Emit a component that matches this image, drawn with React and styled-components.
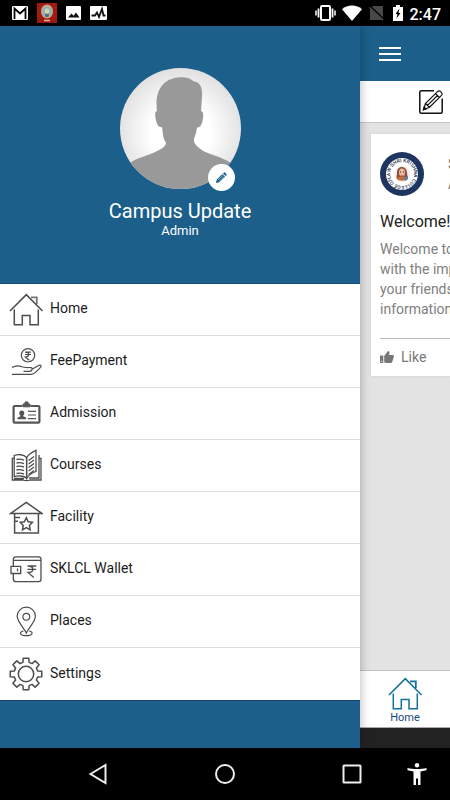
import React, { useState } from 'react';
import styled, { createGlobalStyle } from 'styled-components';

const gearPoints = () => {
  const points = [];
  for (let i = 0; i < 8; i++) {
    const a = i * 45;
    [[-15, 12], [-10, 16], [10, 16], [15, 12]].forEach(([da, r]) => {
      const t = ((a + da) * Math.PI) / 180;
      points.push(`${(17 + r * Math.sin(t)).toFixed(2)},${(17 - r * Math.cos(t)).toFixed(2)}`);
    });
  }
  return points.join(' ');
};

const HouseShape = () => (
  <>
    <path d="M22 4.3h5.8v7" stroke="#777" strokeWidth="1.8" className="chimney" />
    <path d="M1 18 17.3 1.6 33.5 18" />
    <path d="M5.3 16.5v15.2h8v-9.2H21v9.2h8.3V16.5" />
  </>
);

const icons = {
  home: <HouseShape />,
  fee: (
    <g strokeWidth="1.2">
      <circle cx="19" cy="10.3" r="6.7" />
      <path d="M16 7.2h6M16 9.5h6M16.3 7.2c4.6 0 4.6 4.8 0 4.8l4 3.2" />
      <path d="M3 22.5c3-1.8 7-2 10-.7 3 1.2 6 .5 9 .8 2 .3 1.5 3.6-1.5 3.8h-6M23 24.2l7-4c1.8-.6 2.6.6 1.7 2l-4.9 5c-2 2-3 2.1-5 2.1H3" />
    </g>
  ),
  admission: (
    <g stroke="#555">
      <path d="M13.5 9H5.8c-.8 0-1.2.5-1.2 1.2v14.3c0 .8.5 1.2 1.2 1.2h23.4c.8 0 1.2-.5 1.2-1.2V10.2c0-.7-.4-1.2-1.2-1.2h-7.7" strokeWidth="2.2" />
      <path d="M14 9.8V7h2V5h3v2h2v2.8z" fill="#555" strokeWidth="1" />
      <path d="M8.500 22.300v-1.300c.5-1 3-1.200 3-2.200-2-2-1.500-5.300 1.300-5.300s3.300 3.300 1.300 5.300c0 1 2.700 1.200 3 2.200v1.300z" fill="#555" stroke="none" />
      <path d="M19 14.3h8M19 18h8M19 21.7h8" strokeWidth="1.2" />
    </g>
  ),
  courses: (
    <g strokeWidth="1.3">
      <path d="M17.6 8.5C14.5 5.3 9 5 5.200 6.500v21.200c4-1.400 9.500-1 12.400 1.600z" />
      <path d="M17.6 8.5c2.400-3.600 5.500-5.600 9.400-7.200v21.200c-4 1.200-7 3.400-9.400 6.800z" />
      <path d="M5 9.300H3.300V31H14c2 .8 5 .8 7 0h11V9.300h-1.400M30 6v23H20M5 29.500h10" />
      <path d="M7.500 10.500c2.600-.7 5-.4 7.500.7M7.500 14c2.600-.7 5-.4 7.500.7M7.500 17.500c2.600-.7 5-.4 7.500.7M7.500 21c2.600-.7 5-.4 7.500.7M7.500 24.500c2.600-.7 5-.4 7.500.7M19.600 11.500l5.400-4M19.600 15l5.400-4M19.600 18.500l5.400-4M19.600 22l5.400-4M19.600 25.500l5.400-4" />
    </g>
  ),
  facility: (
    <>
      <path d="M17.3 1.3 1.8 12.4h31zM5.600 12.400V32h23.800V12.400M6 16.400h5M6 20.300h3" />
      <path d="m17.300 16.700 1.900 4 4.200.6-3 3.100.7 4.400-3.800-2.100-3.800 2.100.7-4.400-3-3.100 4.200-.6z" />
    </>
  ),
  wallet: (
    <g strokeWidth="1.3">
      <path d="M4.300 13V6.500c0-2 1-2.700 2.700-2.700h22.700c1.500 0 2.300.8 2.300 2.300V26c0 1.700-.8 2.600-2.400 2.600H7c-1.800 0-2.700-.8-2.700-2.700v-5.500M4.500 7.400H32" />
      <path d="M2 13.300h9.700v7.200H2zM8.500 15.500v2.800" />
      <path d="M18.500 13h8.700M18.500 16.300h8.700M19 13c6.500 0 6.500 6.500 0 6.500l5.800 5" />
    </g>
  ),
  places: (
    <g strokeWidth="1.2">
      <path d="M17.300 28c-2-5-9.100-11-9.100-16.700a9.100 9.100 0 0 1 18.200 0C26.400 17 19.300 23 17.300 28z" />
      <circle cx="17.300" cy="11.700" r="3.400" />
      <path d="M14.500 26c-5 1-3.600 4.700 2.800 4.700s7.800-3.700 2.800-4.700" />
    </g>
  ),
  settings: (
    <>
      <polygon points={gearPoints()} strokeLinejoin="round" />
      <circle cx="17" cy="17" r="7.700" />
    </>
  ),
};

const menu = [
  { id: 'home', title: 'Home' },
  { id: 'fee', title: 'FeePayment' },
  { id: 'admission', title: 'Admission' },
  { id: 'courses', title: 'Courses' },
  { id: 'facility', title: 'Facility' },
  { id: 'wallet', title: 'SKLCL Wallet' },
  { id: 'places', title: 'Places' },
  { id: 'settings', title: 'Settings' },
];

const StatusBar = () => (
  <Status>
    <StatusGroup $gap={9}>
      <svg width="16" height="14" viewBox="0 0 16 14">
        <rect width="16" height="14" rx="1" fill="#fff" />
        <path d="M2.500 13V2.500L8 7.500l5.500-5V13" fill="none" stroke="#000" strokeWidth="1.800" />
      </svg>
      <svg width="20" height="20" viewBox="0 0 20 20">
        <rect width="20" height="20" fill="#a31a10" />
        <ellipse cx="10" cy="8.500" rx="6" ry="7" fill="#c4a990" />
        <circle cx="10" cy="8.500" r="4.600" fill="#7fb2c0" />
        <circle cx="10" cy="8" r="2.500" fill="#d8cf9c" />
        <path d="M8 11h4l-.5 3h-3z" fill="#496f82" />
        <path d="M7 17.500h6" stroke="#e8c3ad" strokeWidth="1.500" />
      </svg>
      <svg width="15" height="14" viewBox="0 0 15 14">
        <rect width="15" height="14" rx="1" fill="#fff" />
        <path d="m2 11.500 3.500-4 2 2.300L10 6.500l3.500 5z" fill="#111" />
      </svg>
      <svg width="17" height="14" viewBox="0 0 17 14">
        <rect width="17" height="14" rx="1" fill="#fff" />
        <path d="M1.500 9.500H5l2-3 2 4.500 3-8 1.500 6.500h2" fill="none" stroke="#111" strokeWidth="1.800" />
      </svg>
    </StatusGroup>
    <StatusGroup $gap={6}>
      <svg width="21" height="16" viewBox="0 0 21 16" fill="none" stroke="#fff">
        <rect x="6" y="1" width="9" height="14" rx="1" strokeWidth="2" />
        <path d="M3.500 3.500v9M17.500 3.500v9" strokeWidth="1.800" />
        <path d="M1 5.500v5M20 5.500v5" strokeWidth="1.500" />
      </svg>
      <svg width="20" height="16" viewBox="0 0 20 16">
        <path d="M10 16 0 4.200C5.500-.8 14.500-.8 20 4.200z" fill="#fff" />
      </svg>
      <svg width="18" height="16" viewBox="4 0 18 16">
        <path d="M9 1h10v14H6V4.500z" fill="#484848" />
        <path d="m5 1 15 14" stroke="#000" strokeWidth="2.500" />
        <path d="m5.500 2.500 13.500 12.500" stroke="#555" strokeWidth="1.200" />
      </svg>
      <svg width="12" height="16" viewBox="0 0 12 16">
        <path d="M1 2h3V0h4v2h3v14H1z" fill="#fff" />
        <path d="M7.500 3.500 3.500 9h2l-1 4.500L8.500 8h-2z" fill="#000" />
      </svg>
      <Time>2:47</Time>
    </StatusGroup>
  </Status>
);

const Portrait = () => (
  <svg width="121" height="121" viewBox="0 0 121 121" role="img" aria-label="Profile">
    <defs>
      <radialGradient id="halo" cx="0.500" cy="0.530" r="0.550">
        <stop offset="0.450" stopColor="#fff" />
        <stop offset="1" stopColor="#dedede" />
      </radialGradient>
      <clipPath id="round"><circle cx="60.500" cy="60.500" r="60.500" /></clipPath>
    </defs>
    <g clipPath="url(#round)">
      <rect width="121" height="121" fill="url(#halo)" />
      <path d="M37 43C34.500 24 42 11 58 9.500c7-1 12 .5 16 4 7 1 8.500 7 8 15L81 43c3 1 2.500 5 1.500 10-.7 4-3 7-5.500 6.500-.8 5-1.500 8-3 11-.7 5 2.500 8 8.500 12 7 4 18 6 28 12l12 10v18H-2v-18l14-11c9-5 19-7 26-11 6-3 8-5 8-8-3-3-3-9-4-15.500-3 1-5-2.500-6-6.500-1-5-1.500-9 1-9.500z" fill="#999" />
    </g>
  </svg>
);

const Seal = () => (
  <svg width="44" height="44" viewBox="0 0 44 44" role="img" aria-label="Shri Krishna College of Law">
    <defs><path id="ring" d="M11 26.500a12 12 0 1 1 6.500 6.600A12 12 0 0 1 11 26.500" /></defs>
    <circle cx="22" cy="22" r="22" fill="#1d355f" />
    <circle cx="22" cy="22" r="16" fill="#fff" />
    <SealText><textPath href="#ring">LAW SHRI KRISHNA COLLEGE OF</textPath></SealText>
    <circle cx="22" cy="22" r="8" fill="#f5eeee" />
    <path d="M17 21c-.5-8 10-8 10 0l.7 5H16.500z" fill="#8c4d43" />
    <ellipse cx="22" cy="20.500" rx="3" ry="4" fill="#e9bc9c" />
    <path d="M16.500 26.500c3-3 8-3 11 0-2 3-9 3-11 0z" fill="#c86b35" />
    <path d="m24 26 4-2v3l-3 2z" fill="#4e81b0" />
    <path d="M20 20h1M23 20h1" stroke="#412c38" />
    <path d="M20.500 24h3" stroke="#b2363d" />
  </svg>
);

const App = () => {
  const [active, setActive] = useState('home');

  return (
    <Phone>
      <GlobalStyle />
      <StatusBar />
      <Main>
        <Drawer>
          <Profile>
            <Avatar>
              <Portrait />
              <EditButton type="button" aria-label="Edit profile">
                <svg width="12" height="12" viewBox="0 0 13 13" fill="#1b5f8a">
                  <path d="m1 12 .8-3.700L8 2.300l2.900 2.900-6.200 6zM8.700 1.600l1-1c.3-.3.700-.3 1 0l1.800 1.800c.3.300.3.700 0 1l-1 1z" />
                  <path d="m3 9 5.500-5.200M4.500 10.300 10 5" stroke="#fff" strokeWidth="0.500" />
                </svg>
              </EditButton>
            </Avatar>
            <Name>Campus Update</Name>
            <Role>Admin</Role>
          </Profile>
          <Menu>
            {menu.map((item) => (
              <li key={item.id}>
                <MenuLink
                  href={`#${item.id}`}
                  aria-current={active === item.id ? 'page' : undefined}
                  onClick={() => setActive(item.id)}
                >
                  <LineIcon viewBox="0 0 34 34" aria-hidden="true">{icons[item.id]}</LineIcon>
                  <span>{item.title}</span>
                </MenuLink>
              </li>
            ))}
          </Menu>
        </Drawer>

        <Page>
          <Header>
            <IconButton type="button" aria-label="Menu">
              <svg width="22" height="14" viewBox="0 0 22 14" stroke="#fff" strokeWidth="2">
                <path d="M0 1h22M0 7h22M0 13h22" />
              </svg>
            </IconButton>
          </Header>
          <Toolbar>
            <IconButton type="button" aria-label="Write post">
              <svg width="26" height="26" viewBox="0 0 26 26" fill="none" stroke="#111" strokeWidth="1.500">
                <path d="M16 1.800H3.300c-1 0-1.500.5-1.500 1.500v19.400c0 1 .5 1.500 1.500 1.500h19.400c1 0 1.500-.5 1.500-1.500V9.500" />
                <path d="m5.800 20.500 1.600-6L19.500 2.600c2-2 6 1.500 4 3.700L11.600 18.200zM17.500 4.600l4 4M7.400 14.500l4.200 3.700M9.500 16.400 20 6" strokeWidth="1.200" />
                <path d="m5.500 20.700.6-2.200 1.600 1.500z" fill="#111" />
              </svg>
            </IconButton>
          </Toolbar>
          <Feed>
            <Card>
              <CardHead>
                <Seal />
                <div>
                  <p>Shri Krishna</p>
                  <p>Admin</p>
                </div>
              </CardHead>
              <h2>Welcome!</h2>
              <CardText>
                Welcome to<br />with the important<br />your friends<br />information
              </CardText>
              <LikeButton type="button">
                <svg width="14" height="12" viewBox="0 0 14 12" fill="#777">
                  <path d="M0 4.500h3.300V12H0zM4.200 5 7.500.5C8.500-.4 10 .5 9.500 2L9 4h3.500c1.200 0 1.700 1 1.300 2l-1.500 4.700c-.2.800-.8 1.300-1.600 1.300H6l-1.800-.8z" />
                  <circle cx="1.700" cy="10.300" r="0.600" fill="#fff" />
                </svg>
                Like
              </LikeButton>
            </Card>
          </Feed>
          <TabBar>
            <Tab href="#home">
              <TabIcon viewBox="0 0 34 34" aria-hidden="true"><HouseShape /></TabIcon>
              Home
            </Tab>
          </TabBar>
          <Strip />
        </Page>
      </Main>
      <SystemNav>
        <Keys>
          <IconButton type="button" aria-label="Back">
            <svg width="20" height="22" viewBox="0 0 20 22"><path d="M2.500 11 17.500 2v18z" /></svg>
          </IconButton>
          <IconButton type="button" aria-label="Home screen">
            <svg width="20" height="22" viewBox="0 0 20 22"><circle cx="10" cy="11" r="9" /></svg>
          </IconButton>
          <IconButton type="button" aria-label="Recent apps">
            <svg width="20" height="22" viewBox="0 0 20 22"><rect x="1.500" y="2.500" width="17" height="17" rx="0.500" /></svg>
          </IconButton>
        </Keys>
        <IconButton type="button" aria-label="Accessibility">
          <svg width="20" height="22" viewBox="0 0 20 22">
            <path d="M.5 5c5 1.300 14 1.300 19 0v2.300l-6 1.200V22H11v-6.500H9V22H6.500V8.500l-6-1.200z" fill="#fff" stroke="none" />
            <circle cx="10" cy="2.300" r="2.200" fill="#fff" stroke="none" />
          </svg>
        </IconButton>
      </SystemNav>
    </Phone>
  );
};

export default App;

const GlobalStyle = createGlobalStyle`
  * {
    box-sizing: border-box;
  }
  body {
    margin: 0;
    background: #000;
    font-family: Roboto, "Liberation Sans", sans-serif;
  }
  h1, h2, p, ul {
    margin: 0;
    padding: 0;
  }
  svg {
    display: block;
    flex-shrink: 0;
  }
`;

const Phone = styled.div`
  display: flex;
  flex-direction: column;
  min-height: 100vh;
  overflow: hidden;
`;

const Status = styled.header`
  display: flex;
  justify-content: space-between;
  height: 26px;
  padding: 0 9px 0 12px;
  background: #000;
`;

const StatusGroup = styled.div`
  display: flex;
  align-items: center;
  gap: ${(props) => props.$gap}px;
`;

const Time = styled.span`
  padding-top: 2px;
  color: #fff;
  font-size: 16px;
  font-weight: 500;
`;

const Main = styled.main`
  display: flex;
  flex: 1;
`;

const Drawer = styled.aside`
  position: relative;
  z-index: 1;
  flex: 0 0 80%;
  background: #1b5f8a;
  box-shadow: 0 0 10px rgba(0, 0, 0, 0.3);
`;

const Profile = styled.section`
  display: flex;
  flex-direction: column;
  align-items: center;
  padding: 42px 0 44px;
  color: #fff;
  border-bottom: 1px solid #164f88;
`;

const Avatar = styled.div`
  position: relative;
`;

const EditButton = styled.button`
  position: absolute;
  right: 6px;
  bottom: -2px;
  display: flex;
  align-items: center;
  justify-content: center;
  width: 27px;
  height: 27px;
  padding: 0;
  border: 0;
  border-radius: 50%;
  background: #fff;
`;

const Name = styled.h1`
  margin-top: 10px;
  font-size: 20px;
  font-weight: 400;
  line-height: 24px;
`;

const Role = styled.p`
  font-size: 13px;
  line-height: 16px;
`;

const Menu = styled.ul`
  list-style: none;
  border-bottom: 1px solid #123f7a;
  background: #fff;
`;

const MenuLink = styled.a`
  display: flex;
  align-items: center;
  gap: 7px;
  height: 52px;
  padding-left: 9px;
  border-bottom: 1px solid #dcdfdf;
  color: #1c1c1c;
  font-size: 14px;
  text-decoration: none;
  li:last-child & {
    border-bottom: 0;
  }
  span {
    padding-bottom: 3px;
  }
`;

const LineIcon = styled.svg`
  width: 34px;
  height: 34px;
  fill: none;
  stroke: #4d4d4d;
  stroke-width: 1.5;
`;

const Page = styled.div`
  display: flex;
  flex: 1;
  flex-direction: column;
  min-width: 0;
  overflow: hidden;
  background: #e3e3e3;
`;

const Header = styled.div`
  display: flex;
  align-items: center;
  height: 55px;
  padding-left: 19px;
  background: #1b5f8a;
`;

const IconButton = styled.button`
  padding: 0;
  border: 0;
  background: none;
`;

const Toolbar = styled.div`
  display: flex;
  align-items: center;
  justify-content: flex-end;
  height: 42px;
  padding-right: 6px;
  border-bottom: 1px solid #c4c4c4;
  background: #fff;
`;

const Feed = styled.div`
  flex: 1;
  padding: 11px 0 0 11px;
`;

const Card = styled.article`
  padding: 18px 0 0 9px;
  background: #fff;
  box-shadow: 0 0 3px rgba(0, 0, 0, 0.1);
  overflow: hidden;
  white-space: nowrap;
  h2 {
    margin-top: 16px;
    color: #222;
    font-size: 16px;
    font-weight: 400;
    line-height: 20px;
  }
`;

const CardHead = styled.div`
  display: flex;
  align-items: center;
  gap: 24px;
  color: #777;
  font-size: 14px;
  line-height: 20px;
`;

const SealText = styled.text`
  fill: #26334e;
  font-size: 5px;
  font-weight: 500;
`;

const CardText = styled.p`
  padding: 7px 0 19px;
  border-bottom: 1px solid #bdbdbd;
  color: #808080;
  font-size: 14px;
  line-height: 20px;
`;

const LikeButton = styled.button`
  display: flex;
  align-items: center;
  gap: 7px;
  height: 37px;
  padding: 0 0 2px;
  border: 0;
  background: none;
  color: #777;
  font-family: inherit;
  font-size: 14px;
`;

const TabBar = styled.nav`
  display: flex;
  justify-content: center;
  height: 58px;
  border-top: 1px solid #c4c4c4;
  border-bottom: 1px solid #aaa;
  background: #fff;
`;

const Tab = styled.a`
  display: flex;
  flex-direction: column;
  align-items: center;
  padding-top: 6px;
  color: #17477a;
  font-size: 11px;
  line-height: 14px;
  text-decoration: none;
`;

const TabIcon = styled(LineIcon)`
  stroke: #14709c;
  .chimney {
    stroke: #14709c;
  }
`;

const Strip = styled.div`
  height: 20px;
  background: #222;
`;

const SystemNav = styled.footer`
  display: flex;
  align-items: center;
  gap: 45px;
  height: 52px;
  padding: 0 23px 0 88px;
  background: #000;
  svg {
    fill: none;
    stroke: #eee;
    stroke-width: 2;
  }
`;

const Keys = styled.div`
  display: flex;
  flex: 1;
  justify-content: space-between;
`;
